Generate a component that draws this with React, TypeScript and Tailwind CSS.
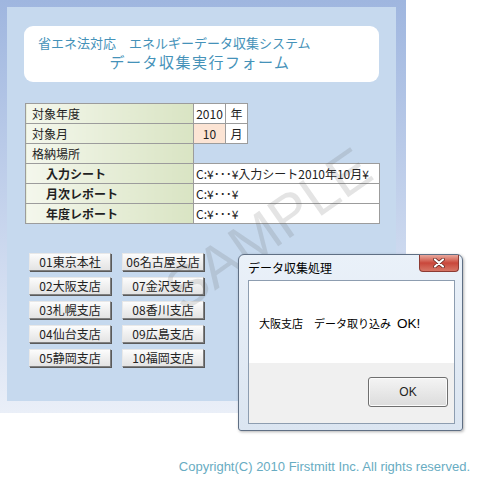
import React from 'react';

const JP = { fontFamily: '"Noto Sans CJK JP", "Liberation Sans", sans-serif' };

const branches = [
    '01東京本社', '02大阪支店', '03札幌支店', '04仙台支店', '05静岡支店',
    '06名古屋支店', '07金沢支店', '08香川支店', '09広島支店', '10福岡支店',
];

const labelCell = "h-[20px] p-0 border border-[#9c9c9c] bg-linear-to-r from-[#f4f7ec] to-[#d9e4c3] text-left";
const whiteCell = "h-[20px] p-0 border border-[#9c9c9c] bg-white";

function CloseButton() {
    return (
        <div className="absolute right-[3px] top-0 w-[40px] h-[17px] rounded-b-[4px] border border-[#8d3b33] border-t-0 bg-linear-to-b from-[#e8a89d] via-[#c9473b] to-[#d67566] flex items-center justify-center">
            <svg width="12" height="10" viewBox="0 0 12 10">
                <path d="M2 1.5 L10 8.5 M10 1.5 L2 8.5" stroke="#5a1f1a" strokeWidth="3.6" strokeLinecap="round" />
                <path d="M2 1.5 L10 8.5 M10 1.5 L2 8.5" stroke="#ffffff" strokeWidth="2.2" strokeLinecap="round" />
            </svg>
        </div>
    );
}

export default function App() {
    return (
        <div className="relative w-[483px] h-[484px] bg-white overflow-hidden text-[#222]" style={JP}>
            {/* outer frame */}
            <div className="w-[406px] h-[413px] pt-[7px] pl-[7px] pr-[10px] pb-[12px] bg-linear-to-b from-[#9fb6df] to-[#eaeff8]">
                <div className="h-full bg-[#c6d9ee] flex flex-col">
                    {/* title box */}
                    <div className="mt-[19px] mx-[17px] h-[56px] bg-white rounded-[9px] flex flex-col text-[#4592b9]">
                        <div className="pl-[14px] pt-[8px] text-[13px] leading-[17px]">省エネ法対応　エネルギーデータ収集システム</div>
                        <div className="text-center text-[15px] leading-[20px] tracking-[1.5px] pt-[1px] pr-[3px]">データ収集実行フォーム</div>
                    </div>

                    {/* settings table */}
                    <table className="mt-[21px] ml-[18px] table-fixed border-collapse text-[12px] leading-none w-[354px]">
                        <colgroup>
                            <col className="w-[168px]" />
                            <col className="w-[32px]" />
                            <col className="w-[22px]" />
                            <col className="w-[132px]" />
                        </colgroup>
                        <tbody>
                            <tr>
                                <td className={labelCell}><span className="pl-[6px]">対象年度</span></td>
                                <td className={whiteCell + " text-center"}>2010</td>
                                <td className={whiteCell + " text-center"}>年</td>
                                <td className="p-0"></td>
                            </tr>
                            <tr>
                                <td className={labelCell}><span className="pl-[6px]">対象月</span></td>
                                <td className="h-[20px] p-0 border border-[#9c9c9c] bg-[#fce4d4] text-center">10</td>
                                <td className={whiteCell + " text-center"}>月</td>
                                <td className="p-0"></td>
                            </tr>
                            <tr>
                                <td className={labelCell}><span className="pl-[6px]">格納場所</span></td>
                                <td colSpan={3} className="p-0"></td>
                            </tr>
                            <tr>
                                <td className={labelCell + " font-bold"}><span className="pl-[20px]">入力シート</span></td>
                                <td colSpan={3} className={whiteCell + " pl-[2px] whitespace-nowrap"}>C:¥･･･¥入力シート2010年10月¥</td>
                            </tr>
                            <tr>
                                <td className={labelCell + " font-bold"}><span className="pl-[20px]">月次レポート</span></td>
                                <td colSpan={3} className={whiteCell + " pl-[2px]"}>C:¥･･･¥</td>
                            </tr>
                            <tr>
                                <td className={labelCell + " font-bold"}><span className="pl-[20px]">年度レポート</span></td>
                                <td colSpan={3} className={whiteCell + " pl-[2px]"}>C:¥･･･¥</td>
                            </tr>
                        </tbody>
                    </table>

                    {/* branch buttons */}
                    <div className="mt-[29px] ml-[22px] grid grid-flow-col grid-rows-5 grid-cols-[82px_82px] gap-x-[11px] gap-y-[6px] w-max">
                        {branches.map(name => (
                            <button
                                key={name}
                                className="h-[18px] text-[12px] leading-none flex items-center justify-center bg-linear-to-b from-[#fcfcfc] to-[#e3e3e3] border border-t-[#e8e8e8] border-l-[#e8e8e8] border-r-[#808080] border-b-[#808080] shadow-[1px_1px_0_#5a5a5a]"
                            >
                                {name}
                            </button>
                        ))}
                    </div>
                </div>
            </div>

            {/* watermark */}
            <div
                className="absolute left-[268px] top-[229px] -translate-x-1/2 -translate-y-1/2 -rotate-[35deg] text-[58px] leading-none whitespace-nowrap text-[rgba(90,90,90,0.16)] pointer-events-none"
                style={{ fontFamily: '"Liberation Sans", sans-serif' }}
            >
                SAMPLE
            </div>

            {/* message box */}
            <div className="absolute left-[238px] top-[254px] w-[225px] h-[177px] rounded-t-[6px] rounded-b-[3px] border border-[#5f6f84] bg-linear-to-b from-[#eaf1f9] to-[#dbe5f1] shadow-[1px_1px_3px_rgba(0,0,0,0.3)] flex flex-col pl-[9px] pr-[7px] pb-[6px]">
                <div className="h-[25px] flex items-center text-[12px] text-black">
                    <span>データ収集処理</span>
                </div>
                <CloseButton />
                <div className="flex-1 border border-[#8d9db0] flex flex-col">
                    <div className="h-[82px] bg-white pl-[10px] pt-[34px] text-[11px] leading-[16px] text-black flex items-baseline">
                        <span>大阪支店　データ取り込み</span>
                        <span className="ml-[6px] text-[13.5px]" style={{ fontFamily: '"Liberation Sans", sans-serif' }}>OK!</span>
                    </div>
                    <div className="flex-1 bg-[#f0f0f0] flex justify-end items-start pt-[14px] pr-[6px]">
                        <button className="w-[80px] h-[30px] rounded-[3px] border border-[#6f6f6f] shadow-[inset_0_0_0_1px_#fbfbfb] bg-linear-to-b from-[#f4f4f4] to-[#dcdcdc] text-[12px] text-[#222]" style={{ fontFamily: '"Liberation Sans", sans-serif' }}>
                            OK
                        </button>
                    </div>
                </div>
            </div>

            {/* copyright */}
            <div
                className="mt-[47px] pr-[13px] text-right text-[13px] leading-[14px] text-[#68acc2]"
                style={{ fontFamily: '"Liberation Sans", sans-serif' }}
            >
                Copyright(C) 2010 Firstmitt Inc. All rights reserved.
            </div>
        </div>
    );
}
